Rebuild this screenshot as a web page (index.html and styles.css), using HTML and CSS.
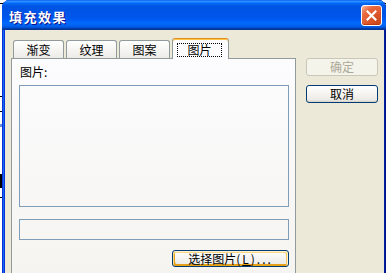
FILE: index.html
```html
<!DOCTYPE html>
<html>

<head>
    <meta charset="utf-8">
    <title>填充效果</title>
    <link rel="stylesheet" href="styles.css">
</head>

<body>
    <div class="window">
        <div class="title-bar">
            <span class="title">填充效果</span>
            <button class="close" aria-label="关闭">
                <svg width="11" height="11" viewBox="0 0 11 11">
                    <path d="M1.5 1.5 L9.5 9.5 M9.5 1.5 L1.5 9.5" stroke="#fff" stroke-width="2.2" stroke-linecap="square" />
                </svg>
            </button>
        </div>
        <div class="window-body">
            <div class="tab-area">
                <div class="tabs">
                    <div class="tab">渐变</div>
                    <div class="tab">纹理</div>
                    <div class="tab">图案</div>
                    <div class="tab selected"><span class="focus">图片</span></div>
                </div>
                <div class="panel">
                    <div class="label">图片:</div>
                    <div class="preview"></div>
                    <div class="name-box"></div>
                    <div class="row-right">
                        <button class="button hover pick">选择图片<span class="mono">(<u>L</u>)...</span></button>
                    </div>
                </div>
            </div>
            <div class="side">
                <button class="button" disabled>确定</button>
                <button class="button">取消</button>
            </div>
        </div>
    </div>
</body>

</html>
```

FILE: styles.css
```css
html,
body {
    margin: 0;
}

body {
    width: 386px;
    height: 273px;
    overflow: hidden;
    font-family: "Noto Sans CJK SC", sans-serif;
    font-size: 12px;
    color: #000;
    background: linear-gradient(to bottom,
            #fff 0, #fff 3px, #000 3px, #000 4px,
            #fff 4px, #fff 96px, #000 96px, #000 97px,
            #fff 97px, #fff 111px, #000 111px, #000 112px,
            #fff 112px, #fff 124px, #6d8fd8 124px, #6d8fd8 127px,
            #fff 127px, #fff 174px, #000 174px, #000 188px,
            #fff 188px, #fff 197px, #000 197px, #000 198px,
            #fff 198px);
}

.window {
    margin-left: 2px;
    width: 384px;
    height: 300px;
    background: #0831d9;
    box-shadow: inset 1px 0 #0831d9, inset 2px 0 #166aee, inset -1px 0 #00138c, inset -2px 0 #001ea0;
    border-radius: 8px 8px 0 0;
    display: flex;
    flex-direction: column;
}

.title-bar {
    flex: none;
    height: 30px;
    box-sizing: border-box;
    padding: 0 4px 0 7px;
    display: flex;
    align-items: center;
    justify-content: space-between;
    border-radius: 8px 8px 0 0;
    background: linear-gradient(180deg, #0058ee 0%, #3593ff 4%, #288eff 6%, #127dff 8%, #036ffc 10%, #0262ee 14%, #0057e5 20%, #0054e3 24%, #0055eb 56%, #005bf5 66%, #026afe 76%, #0062ef 86%, #0052d6 92%, #0040ab 94%, #003092 100%);
}

.title {
    color: #fff;
    font-size: 13px;
    font-weight: bold;
    letter-spacing: 1.5px;
    text-shadow: 1px 1px #0f1089;
    margin-top: 2px;
}

.close {
    width: 21px;
    height: 21px;
    padding: 0;
    border: 1px solid #fff;
    border-radius: 3px;
    display: flex;
    align-items: center;
    justify-content: center;
    background: radial-gradient(circle at 85% 85%, #c94a1c 0%, #e2582d 45%, #e8693f 70%, #f6a487 92%, #ffd9c8 100%);
    box-shadow: inset 0 -1px 1px #b83a10;
}

.window-body {
    flex: 1;
    margin: 0 2px 0 3px;
    background: #ece9d8;
    display: flex;
    align-items: flex-start;
    padding: 8px 0 0 6px;
}

.tab-area {
    width: 285px;
    display: flex;
    flex-direction: column;
}

.tabs {
    height: 20px;
    display: flex;
    align-items: flex-end;
    gap: 2px;
    padding-left: 2px;
    position: relative;
    z-index: 1;
}

.tab {
    width: 51px;
    height: 18px;
    box-sizing: border-box;
    border: 1px solid #919b9c;
    border-bottom: none;
    border-radius: 3px 3px 0 0;
    background: linear-gradient(#fff, #ecebe6);
    display: flex;
    justify-content: center;
    padding-top: 1px;
    line-height: 16px;
}

.tab.selected {
    width: 57px;
    height: 21px;
    margin-bottom: -1px;
    background: #fcfcfe;
    border-top-color: #e68b2c;
    box-shadow: inset 0 1px #ffc73c;
    padding: 4px 0 0;
}

.focus {
    width: 45px;
    height: 14px;
    box-sizing: border-box;
    border: 1px dotted #000;
    line-height: 12px;
    text-align: center;
    margin-right: 2px;
}

.panel {
    height: 240px;
    border: 1px solid #919b9c;
    background: linear-gradient(#fcfcfe, #f4f3ee);
    padding: 6px 6px 0 7px;
    display: flex;
    flex-direction: column;
}

.label {
    line-height: 14px;
    margin: 0 0 6px 1px;
}

.preview {
    height: 122px;
    box-sizing: border-box;
    border: 1px solid #7f9db9;
}

.name-box {
    height: 21px;
    box-sizing: border-box;
    border: 1px solid #7f9db9;
    margin-top: 12px;
}

.row-right {
    display: flex;
    justify-content: flex-end;
    margin-top: 10px;
}

.side {
    margin-left: 10px;
    padding-top: 20px;
    display: flex;
    flex-direction: column;
    gap: 9px;
}

.button {
    width: 72px;
    height: 18px;
    box-sizing: border-box;
    padding: 0;
    font: inherit;
    line-height: 14px;
    color: #000;
    border: 1px solid #003c74;
    border-radius: 3px;
    background: linear-gradient(180deg, #fff, #ecebe6 86%, #d6d0c5);
}

.button:disabled {
    border-color: #c9c7ba;
    background: #f5f4ea;
    color: #aca899;
}

.button.hover {
    box-shadow: inset -1px 1px #fff0cf, inset 1px 2px #fdd889, inset -2px 2px #fbc761, inset 2px -2px #e5a01a;
}

.pick {
    width: 117px;
    height: 17px;
}

.mono {
    letter-spacing: 2px;
}
```
